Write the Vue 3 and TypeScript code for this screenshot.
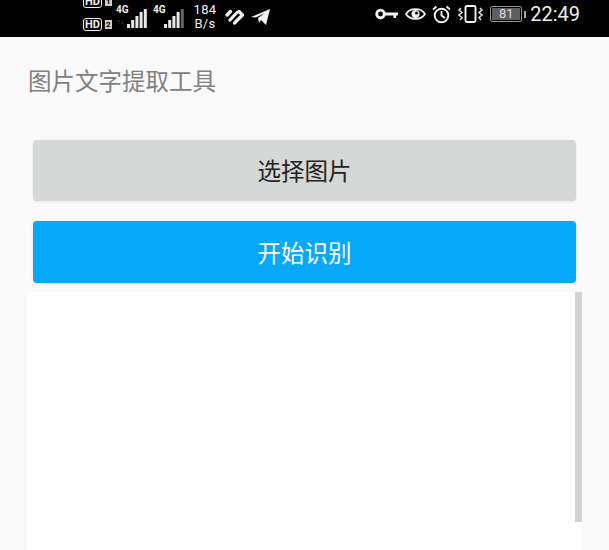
<script setup lang="ts">
const title = '图片文字提取工具'
const signals = [
  { bars: [4, 8, 12, 16, 19], sub: true },
  { bars: [4, 8, 12, 16, 19], sub: false },
]
</script>

<template>
  <div class="page">
    <header class="status">
      <div class="hd-stack">
        <div class="hd-row"><span class="hd">HD</span><span class="sim">1</span></div>
        <div class="hd-row"><span class="hd">HD</span><span class="sim">2</span></div>
      </div>
      <div v-for="(s, i) in signals" :key="i" class="signal">
        <span class="net">4G</span>
        <span v-if="s.sub" class="sub">↑↓</span>
        <svg width="20" height="19" viewBox="0 0 20 19">
          <rect
            v-for="(b, j) in s.bars"
            :key="j"
            :x="j * 4.2"
            :y="19 - b"
            width="3"
            :height="b"
            :fill="!s.sub && j === 4 ? '#666' : '#e8e8e8'"
          />
        </svg>
      </div>
      <div class="speed"><span>184</span><span>B/s</span></div>
      <svg class="app-a" width="20" height="16" viewBox="0 0 20 16">
        <path d="M2 6 L5.500 2.500 M5 11 L12 3.500 M9.500 14 L17.500 6 M14 2.500 L17.500 6" fill="none" stroke="#f2f2f2" stroke-width="3.200" stroke-linecap="round" />
      </svg>
      <svg class="app-b" width="20" height="16" viewBox="0 0 20 16">
        <path d="M0 8 L19 0 L15 16 L10 11 L8 14 L7 9 L14 4 L5 8.500 Z" fill="#f2f2f2" />
      </svg>
      <div class="spacer"></div>
      <svg class="ic-key" width="23" height="12" viewBox="0 0 23 12">
        <circle cx="5.500" cy="6" r="3.800" fill="none" stroke="#f2f2f2" stroke-width="2.800" />
        <path d="M10 4.600 H23 V7.400 H21 V10 H18.500 V7.400 H10 Z" fill="#f2f2f2" />
      </svg>
      <svg class="ic-eye" width="21" height="14" viewBox="0 0 21 14">
        <path d="M1 7 C5 0.500 16 0.500 20 7 C16 13.500 5 13.500 1 7 Z" fill="none" stroke="#f2f2f2" stroke-width="1.800" />
        <circle cx="10.500" cy="7" r="4" fill="#f2f2f2" />
        <circle cx="11.500" cy="6" r="1.500" fill="#000" />
      </svg>
      <svg class="ic-alarm" width="19" height="19" viewBox="0 0 19 19">
        <circle cx="9.500" cy="10.500" r="6.800" fill="none" stroke="#f2f2f2" stroke-width="1.900" />
        <path d="M9.500 6 V10.500 L13 13 M1 4.500 L4.500 1.500 M18 4.500 L14.500 1.500" fill="none" stroke="#f2f2f2" stroke-width="1.900" />
      </svg>
      <svg class="ic-vib" width="25" height="18" viewBox="0 0 25 18">
        <rect x="7.500" y="1" width="10" height="16" rx="1.500" fill="none" stroke="#f2f2f2" stroke-width="1.900" />
        <path d="M3 3 L1 5 L4 7.500 L1 10 L4 12.500 L2 15 M22 3 L24 5 L21 7.500 L24 10 L21 12.500 L23 15" fill="none" stroke="#e0e0e0" stroke-width="1.500" />
      </svg>
      <div class="battery">
        <div class="cell"><span>81</span></div>
        <div class="nub"></div>
      </div>
      <span class="time">22:49</span>
    </header>

    <main class="content">
      <h1 class="title">{{ title }}</h1>
      <div class="actions">
        <button class="btn btn-default" type="button">选择图片</button>
        <button class="btn btn-primary" type="button">开始识别</button>
      </div>
      <section class="panel">
        <div class="scrollbar"></div>
      </section>
    </main>
  </div>
</template>

<style>
html, body { margin: 0; background: #fafafa; overflow: hidden; }
</style>

<style scoped>
.page {
  width: 609px;
  height: 550px;
  overflow: hidden;
  background: #fafafa;
  font-family: "Noto Sans CJK SC", "Noto Sans", sans-serif;
  display: flex;
  flex-direction: column;
}
.status {
  height: 37px;
  flex: none;
  background: #000;
  color: #f0f0f0;
  display: flex;
  align-items: center;
  padding-left: 83px;
  padding-right: 29px;
  box-sizing: border-box;
  font-family: "Roboto", sans-serif;
}
.hd-stack {
  width: 27px;
  height: 36px;
  display: flex;
  flex-direction: column;
  justify-content: space-between;
  margin-top: -11px;
}
.hd-row { display: flex; align-items: center; gap: 3px; height: 13px; }
.hd {
  font-size: 11px;
  font-weight: 700;
  line-height: 11px;
  border: 1px solid #f0f0f0;
  border-radius: 3px;
  padding: 0 1px;
}
.sim { font-size: 8px; font-weight: 700; background: #ccc; color: #000; line-height: 9px; padding: 0 1px; }
.signal { position: relative; width: 31px; height: 24px; margin-left: 6px; display: flex; justify-content: flex-end; align-items: flex-end; margin-top: -5px; }
.net { position: absolute; left: 0; top: 0; font-size: 10px; font-weight: 700; line-height: 11px; }
.sub { position: absolute; left: 1px; top: 14px; font-size: 7px; line-height: 8px; color: #666; }
.speed {
  display: flex;
  flex-direction: column;
  align-items: center;
  margin-left: 10px;
  margin-top: -3px;
  width: 22px;
  font-size: 13px;
  line-height: 14px;
  letter-spacing: 0.3px;
}
.app-a { margin-left: 9px; margin-top: -4px; }
.app-b { margin-left: 6px; margin-top: -4px; }
.spacer { flex: 1; }
.ic-key { margin-top: -9px; }
.ic-eye { margin-left: 7px; margin-top: -9px; }
.ic-alarm { margin-left: 6px; margin-top: -9px; }
.ic-vib { margin-left: 7px; margin-top: -9px; }
.battery { display: flex; align-items: center; gap: 2px; margin-left: 7px; margin-top: -9px; }
.cell {
  width: 32px;
  height: 16px;
  box-sizing: border-box;
  border: 1px solid #999;
  border-radius: 2px;
  padding: 1px;
  display: flex;
}
.cell span {
  flex: 1;
  background: #5e5e5e;
  font-size: 13px;
  line-height: 12px;
  text-align: center;
  color: #ddd;
}
.nub { width: 2px; height: 7px; background: #aaa; }
.time { margin-left: 4px; margin-top: -9px; font-size: 20px; line-height: 22px; color: #eee; }

.content { flex: 1; display: flex; flex-direction: column; padding: 0 27px; min-height: 0; }
.title {
  margin: 0;
  padding: 26px 0 0 1px;
  font-size: 23.500px;
  font-weight: 400;
  line-height: 34px;
  color: #808080;
}
.actions { display: flex; flex-direction: column; gap: 20px; padding: 42.500px 6px 0; }
.btn {
  height: 61.500px;
  border: 0;
  border-radius: 4px;
  font-family: inherit;
  font-size: 23.500px;
  padding: 0;
}
.btn-default { background: #d6d7d7; color: #222; box-shadow: 0 1px 3px rgba(0, 0, 0, 0.08); }
.btn-primary { background: #05a8fb; color: #fff; box-shadow: 0 0 3px rgba(5, 168, 251, 0.18); }
.panel {
  flex: 1;
  margin-top: 9.500px;
  background: #fff;
  position: relative;
}
.scrollbar { position: absolute; right: 0; top: 0; width: 7px; height: 230px; background: #d2d2d2; }
</style>
